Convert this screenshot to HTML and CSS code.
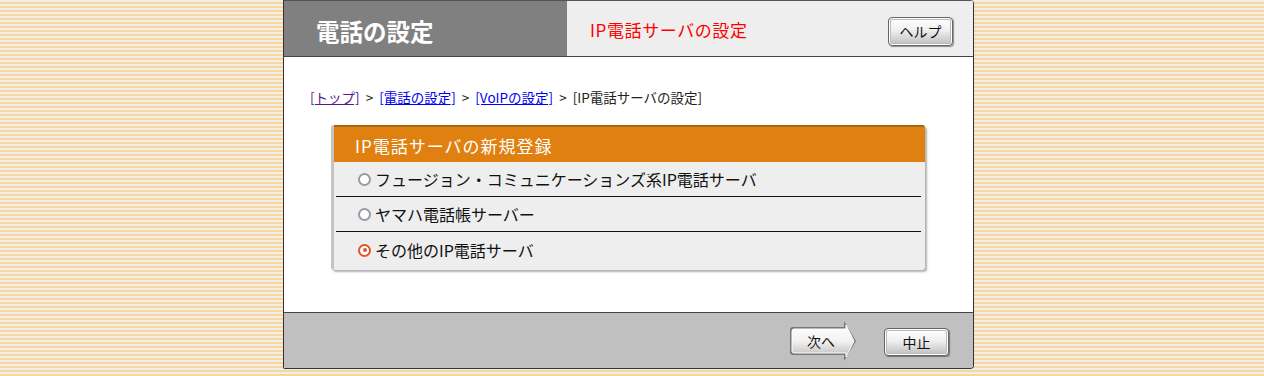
FILE: index.html
```html
<!DOCTYPE html>
<html lang="ja">
<head>
<meta charset="UTF-8">
<title>IP電話サーバの設定</title>
<link rel="stylesheet" href="styles.css">
</head>
<body>

<div class="panel">
    <div class="header">
        <div class="headerTitle">電話の設定</div>
        <div class="headerSub">
            <span class="subTitle">IP電話サーバの設定</span>
            <span class="btn btnHelp">ヘルプ</span>
        </div>
    </div>

    <div class="content">
        <div class="crumbs">
            <a href="#" class="visited">[トップ]</a><span class="sep">&gt;</span><a href="#">[電話の設定]</a><span class="sep">&gt;</span><a href="#">[VoIPの設定]</a><span class="sep">&gt;</span>[IP電話サーバの設定]
        </div>

        <div class="box">
            <div class="boxHead">IP電話サーバの新規登録</div>
            <div class="row"><span class="radio"></span>フュージョン・コミュニケーションズ系IP電話サーバ</div>
            <div class="row"><span class="radio"></span>ヤマハ電話帳サーバー</div>
            <div class="row last"><span class="radio on"></span>その他のIP電話サーバ</div>
        </div>
    </div>

    <div class="footer">
        <span class="btnNext">
            <svg width="68" height="40" viewBox="0 0 68 40">
                <defs>
                    <linearGradient id="g" x1="0" y1="0" x2="0" y2="1">
                        <stop offset="0" stop-color="#ffffff"/>
                        <stop offset="0.5" stop-color="#f2f2f2"/>
                        <stop offset="1" stop-color="#bdbdbd"/>
                    </linearGradient>
                </defs>
                <path d="M4 6 H55 V0 L67 20 L55 40 V34 H4 Q1 34 1 31 V9 Q1 6 4 6 Z" fill="#777"/>
                <path d="M5 8 H57 V4 L65 20 L57 36 V32 H5 Q3 32 3 30 V10 Q3 8 5 8 Z" fill="url(#g)" stroke="#fff" stroke-width="1"/>
            </svg>
            <span class="nextLabel">次へ</span>
        </span>
        <span class="btn btnStop">中止</span>
    </div>
</div>

</body>
</html>
```

FILE: styles.css
```css
body {
    margin: 0;
    font-family: "Noto Sans CJK JP", "Noto Sans", sans-serif;
    background: repeating-linear-gradient(to bottom, #f2ede6 0, #f2ede6 2px, #f5d7a0 2px, #f5d7a0 4px);
    height: 376px;
    overflow: hidden;
}
.panel {
    width: 689px;
    margin-left: 283px;
    border: 1px solid #333;
    border-top: none;
    border-radius: 0 4px 4px 2px;
    background-color: #fff;
    overflow: hidden;
}
.header {
    display: flex;
    height: 55px;
    border-top: 1px solid #555;
    border-bottom: 1px solid #444;
}
.headerTitle {
    width: 283px;
    background-color: #808080;
    color: #fff;
    font-size: 23.5px;
    font-weight: bold;
    padding-left: 32px;
    box-sizing: border-box;
    line-height: 61px;
}
.headerSub {
    flex: 1;
    background-color: #eee;
    display: flex;
    align-items: center;
    justify-content: space-between;
    padding: 2px 19px 0 23px;
}
.subTitle {
    color: #f00;
    font-size: 17px;
    letter-spacing: 0.6px;
}
.btn {
    display: inline-flex;
    align-items: center;
    justify-content: center;
    box-sizing: border-box;
    border: 1px solid #666;
    border-radius: 4px;
    box-shadow: inset 0 0 0 1px #fff, inset 0 0 0 2px #bbb, 1px 1px 1px rgba(0, 0, 0, 0.4);
    background: linear-gradient(to bottom, #fff 0%, #f0f0f0 45%, #bdbdbd 100%);
    font-size: 14px;
    color: #111;
}
.btnHelp {
    width: 65px;
    height: 29px;
    margin-top: 3px;
    margin-right: 1px;
}
.content {
    height: 255px;
    padding: 31px 0 0 26px;
    box-sizing: border-box;
}
.crumbs {
    font-size: 13.5px;
    color: #222;
    line-height: 18px;
}
.crumbs a {
    color: #0000ee;
}
.crumbs a.visited {
    color: #551a8b;
}
.sep {
    margin: 0 6px;
}
.box {
    margin: 19px 0 0 21px;
    width: 594px;
    background-color: #eee;
    border-left: 3px solid #c4c4c4;
    border-radius: 3px;
    box-sizing: border-box;
    box-shadow: 2px 2px 2px rgba(0, 0, 0, 0.3);
    overflow: hidden;
    padding-bottom: 2px;
}
.boxHead {
    background-color: #e08010;
    border-top: 2px solid #a96510;
    color: #fff;
    font-size: 17px;
    letter-spacing: 1px;
    height: 35px;
    line-height: 38px;
    padding-left: 21px;
}
.row {
    display: flex;
    align-items: center;
    height: 34px;
    margin: 0 4px 0 2px;
    padding-left: 22px;
    border-bottom: 1px solid #111;
    font-size: 16px;
    color: #111;
}
.row.last {
    border-bottom: none;
    height: 36px;
}
.radio {
    width: 13px;
    height: 13px;
    border: 2px solid #9a9aa4;
    border-radius: 50%;
    background-color: #fff;
    box-sizing: border-box;
    margin-right: 4px;
    position: relative;
}
.radio.on {
    border-color: #e05525;
}
.radio.on::after {
    content: "";
    position: absolute;
    left: 2.5px;
    top: 2.5px;
    width: 4px;
    height: 4px;
    border-radius: 50%;
    background-color: #e05525;
}
.footer {
    height: 55px;
    background-color: #c0c0c0;
    border-top: 1px solid #444;
    display: flex;
    align-items: center;
    justify-content: flex-end;
    padding-right: 24px;
    gap: 27px;
}
.btnNext {
    position: relative;
    width: 68px;
    height: 40px;
    margin-top: 1px;
}
.btnNext svg {
    display: block;
}
.nextLabel {
    position: absolute;
    left: 6px;
    top: 10px;
    width: 52px;
    height: 20px;
    line-height: 20px;
    text-align: center;
    font-size: 14px;
    color: #111;
}
.btnStop {
    width: 65px;
    height: 28px;
    margin-top: 3px;
}
```
